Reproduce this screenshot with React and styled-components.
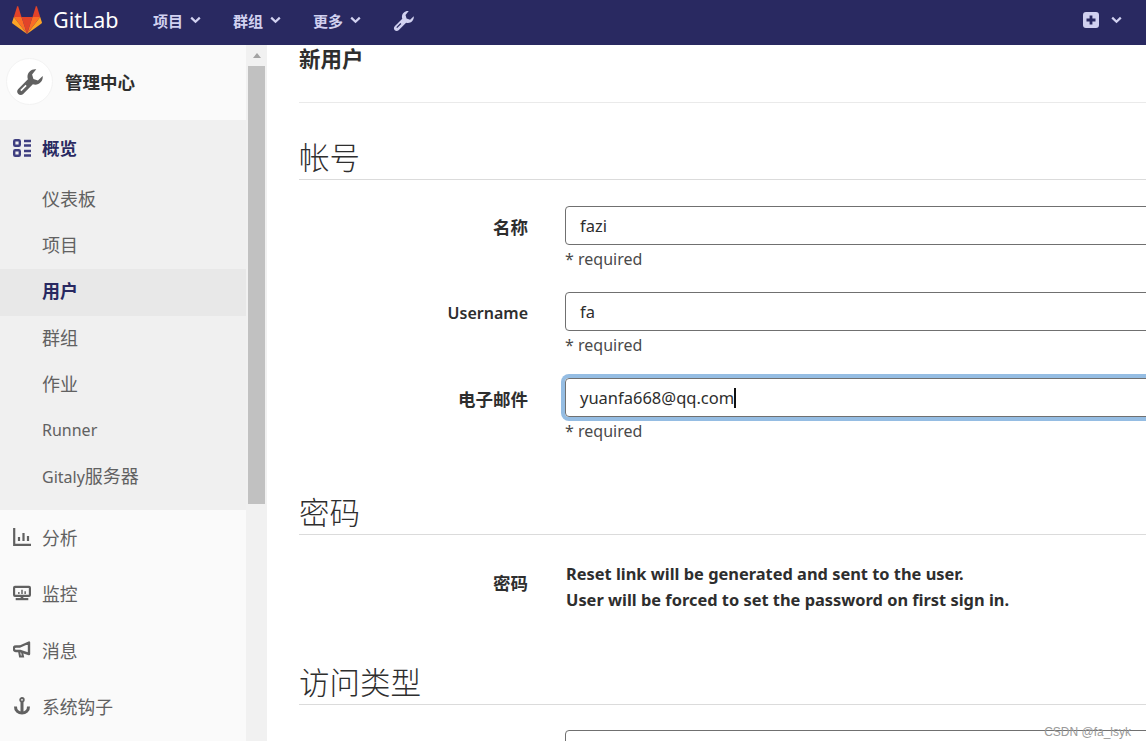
import React from 'react';
import styled, { createGlobalStyle } from 'styled-components';

const FONT = '"Noto Sans", "Noto Sans CJK SC", sans-serif';

const GlobalStyle = createGlobalStyle`
  html, body { margin: 0; padding: 0; height: 100%; overflow: hidden; background: #fff; }
  body { font-family: ${FONT}; color: #2e2e2e; }
  * { box-sizing: border-box; }
`;

const Page = styled.div`
  position: relative;
  width: 1146px;
  height: 741px;
  overflow: hidden;
  display: flex;
  flex-direction: column;
`;

const Navbar = styled.header`
  flex: 0 0 45px;
  height: 45px;
  background: #292961;
  display: flex;
  align-items: center;
  padding: 0 24px 5px 12px;
`;

const Brand = styled.div`
  display: flex;
  align-items: center;
  gap: 11px;
  width: 141px;
  color: #fff;
  font-size: 21.5px;
  line-height: 1;
`;

const NavItem = styled.div`
  display: flex;
  align-items: center;
  gap: 7px;
  width: 80px;
  color: #d1d1f0;
  font-size: 15px;
  font-weight: 700;
`;

const NavRight = styled.div`
  margin-left: auto;
  display: flex;
  align-items: center;
  gap: 12px;
  color: #d1d1f0;
`;

const Body = styled.div`
  flex: 1;
  display: flex;
  min-height: 0;
`;

const Sidebar = styled.aside`
  flex: 0 0 246px;
  background: #fafafa;
`;

const AdminHeader = styled.div`
  height: 75px;
  display: flex;
  align-items: center;
  gap: 12px;
  padding: 0 0 2px 6px;
  font-size: 17.5px;
  font-weight: 700;
  color: #2e2e2e;
`;

const Avatar = styled.div`
  width: 47px;
  height: 47px;
  border-radius: 50%;
  background: #fff;
  border: 1px solid #f3f3f3;
  display: flex;
  align-items: center;
  justify-content: center;
  color: #616161;
`;

const ActiveGroup = styled.div`
  background: #f0f0f0;
  height: 390px;
`;

const GroupTitle = styled.div`
  height: 57px;
  display: flex;
  align-items: center;
  gap: 11px;
  padding: 0 0 2px 13px;
  color: #292961;
  font-size: 17.5px;
  font-weight: 700;
`;

const SubItem = styled.div`
  height: 46.2px;
  line-height: 45px;
  padding-left: 42px;
  font-size: 16px;
  color: ${p => (p.$active ? '#292961' : '#616161')};
  font-weight: ${p => (p.$active ? 700 : 400)};
  background: ${p => (p.$active ? '#e8e8e8' : 'transparent')};
`;

const Cjk = styled.span`
  font-size: 18px;
`;

const MainItem = styled.div`
  height: 56.3px;
  display: flex;
  align-items: center;
  gap: 11px;
  padding: 0 0 2px 13px;
  font-size: 17.8px;
  color: #616161;
`;

const IconSlot = styled.span`
  flex: 0 0 18px;
  width: 18px;
  display: flex;
  justify-content: center;
`;

const ScrollTrack = styled.div`
  flex: 0 0 21px;
  background: #f1f1f1;
  padding: 0 2px;
  display: flex;
  flex-direction: column;
  align-items: center;
`;

const ScrollArrow = styled.div`
  height: 21px;
  width: 100%;
  display: flex;
  align-items: center;
  justify-content: center;
  &::before {
    content: "";
    border-left: 4.5px solid transparent;
    border-right: 4.5px solid transparent;
    border-bottom: 5px solid #a3a3a3;
  }
`;

const ScrollThumb = styled.div`
  width: 100%;
  height: 438px;
  background: #c1c1c1;
`;

const Content = styled.main`
  flex: 1;
  min-width: 0;
  padding-left: 32px;
  overflow: hidden;
`;

const PageTitle = styled.h3`
  margin: 0;
  height: 58px;
  border-bottom: 1px solid #eaeaea;
  font-size: 21.5px;
  font-weight: 700;
  line-height: 28px;
  color: #2e2e2e;
`;

const Section = styled.section`
  margin-top: ${p => p.$top}px;
`;

const Legend = styled.div`
  height: 41px;
  border-bottom: 1px solid #dbdbdb;
  font-size: 30.5px;
  font-weight: 300;
  line-height: 36px;
  color: #2e2e2e;
`;

const Fields = styled.div`
  padding-top: ${p => p.$top}px;
`;

const Row = styled.div`
  display: grid;
  grid-template-columns: 229px 1fr;
  column-gap: 37px;
  height: 86px;
`;

const Label = styled.label`
  text-align: right;
  font-size: ${p => (p.$latin ? 16 : 17.5)}px;
  font-weight: ${p => (p.$latin ? 600 : 700)};
  line-height: 43px;
  color: #2e2e2e;
`;

const FakeInput = styled.div`
  height: 39px;
  width: 640px;
  border: 1px solid #707070;
  border-radius: 4px;
  padding-left: 14px;
  font-size: 16.5px;
  line-height: 38px;
  color: #2e2e2e;
  display: flex;
  align-items: center;
  box-shadow: ${p => (p.$focus ? '0 0 0 4px #95bde3' : 'none')};
`;

const Caret = styled.span`
  display: inline-block;
  width: 2px;
  height: 20px;
  background: #111;
`;

const Help = styled.div`
  font-size: 16px;
  line-height: 28px;
  color: #4a4a4a;
`;

const Note = styled.div`
  font-size: 16.4px;
  font-weight: 700;
  line-height: 26px;
  padding: 26px 0 0 1px;
  color: #2e2e2e;
`;

const NoteRow = styled(Row)`
  height: 97px;
`;

const NoteLabel = styled(Label)`
  padding-top: 35px;
  line-height: 26px;
`;

const Watermark = styled.div`
  position: absolute;
  right: 15px;
  bottom: 2px;
  font-family: "Liberation Sans", sans-serif;
  font-size: 12px;
  color: #9a9a9a;
`;

const Logo = () => (
  <svg width="30" height="28" viewBox="0 0 30 28">
    <path fill="#e24329" d="M15 28 20.5 11h-11z" />
    <path fill="#fc6d26" d="M15 28 9.5 11H1.8z" />
    <path fill="#fca326" d="M1.8 11 .1 16.2c-.2.5 0 1 .4 1.3L15 28z" />
    <path fill="#e24329" d="M1.8 11h7.7L6.2.6c-.2-.5-.9-.5-1.1 0z" />
    <path fill="#fc6d26" d="M15 28l5.5-17h7.7z" />
    <path fill="#fca326" d="M28.2 11l1.7 5.2c.2.5 0 1-.4 1.3L15 28z" />
    <path fill="#e24329" d="M28.2 11h-7.7L23.8.6c.2-.5.9-.5 1.1 0z" />
  </svg>
);

const Chevron = () => (
  <svg width="11" height="8" viewBox="0 0 11 8">
    <path d="M1.2 1.6 5.5 5.8 9.8 1.6" fill="none" stroke="currentColor" strokeWidth="2.2" />
  </svg>
);

const Wrench = ({ size }) => (
  <svg width={size} height={size} viewBox="0 0 24 24">
    <path
      fill="currentColor"
      fillRule="evenodd"
      d="M18 1.2C14 .6 10.200 3.600 10.200 7.800c0 .8.1 1.500.4 2.200L2 18.600c-1.300 1.300-1.300 3.300 0 4.500 1.200 1.200 3.200 1.200 4.400 0l8.600-8.600c.7.2 1.400.3 2.100.3 4.200 0 7.200-3.800 6.600-7.800L19.500 11l-4-1.200-1.200-4zM3.800 19.600l4.700-4.700 1 1-4.700 4.700z"
    />
  </svg>
);

const PlusSquare = () => (
  <svg width="16" height="16" viewBox="0 0 16 16">
    <path
      fill="currentColor"
      fillRule="evenodd"
      d="M3 0h10a3 3 0 0 1 3 3v10a3 3 0 0 1-3 3H3a3 3 0 0 1-3-3V3a3 3 0 0 1 3-3zm3.600 3.500v3.100H3.500v2.800h3.100v3.100h2.800V9.400h3.100V6.600H9.400V3.500z"
    />
  </svg>
);

const OverviewIcon = () => (
  <svg width="18" height="18" viewBox="0 0 18 18" fill="none" stroke="#3f3f80">
    <rect x="1.200" y="1.200" width="5.600" height="5.600" rx="1" strokeWidth="2.400" />
    <rect x="1.200" y="11.200" width="5.600" height="5.600" rx="1" strokeWidth="2.400" />
    <path d="M11 2h7M11 6.500h7M11 12h7M11 16.500h7" strokeWidth="2.400" />
  </svg>
);

const ChartIcon = () => (
  <svg width="18" height="18" viewBox="0 0 18 18" fill="none" stroke="currentColor" strokeWidth="2.200">
    <path d="M1.200 0v16.800H18" />
    <path d="M6 9v4M10.500 5v8M15 8v5" />
  </svg>
);

const MonitorIcon = () => (
  <svg width="20" height="16" viewBox="0 0 20 16" fill="none" stroke="currentColor">
    <rect x="1.200" y="1.200" width="17.600" height="10" rx="1" strokeWidth="2.400" />
    <path d="M3 14.800h14" strokeWidth="2.400" />
    <path d="M10 11v3" strokeWidth="3" />
    <path d="M6.500 7v2M10 4.500V9M13.500 6v3" strokeWidth="1.600" />
  </svg>
);

const BullhornIcon = () => (
  <svg width="18" height="17" viewBox="0 0 18 17" fill="none" stroke="currentColor" strokeWidth="2.400">
    <path d="M16 1.500v11.500L7 10H3a2.200 2.200 0 0 1 0-4.500h4z" strokeLinejoin="round" />
    <path d="M6 10l1 5.500h3L9 11" strokeWidth="2" />
  </svg>
);

const AnchorIcon = () => (
  <svg width="18" height="18" viewBox="0 0 18 18" fill="none" stroke="currentColor" strokeWidth="3">
    <circle cx="9" cy="2.800" r="1.800" strokeWidth="1.800" />
    <path d="M9 5v11.500" />
    <path d="M2.500 9.500c-.5 8.500 13.500 8.500 13 0" strokeWidth="3" />
  </svg>
);

const mainItems = [
  { label: '分析', Icon: ChartIcon },
  { label: '监控', Icon: MonitorIcon },
  { label: '消息', Icon: BullhornIcon },
  { label: '系统钩子', Icon: AnchorIcon },
];

const fields = [
  { label: '名称', value: 'fazi' },
  { label: 'Username', value: 'fa', latin: true },
  { label: '电子邮件', value: 'yuanfa668@qq.com', focus: true },
];

export default function App() {
  return (
    <Page>
      <GlobalStyle />
      <Navbar>
        <Brand>
          <Logo />
          GitLab
        </Brand>
        {['项目', '群组', '更多'].map(item => (
          <NavItem key={item}>
            {item}
            <Chevron />
          </NavItem>
        ))}
        <NavItem>
          <Wrench size={21} />
        </NavItem>
        <NavRight>
          <PlusSquare />
          <Chevron />
        </NavRight>
      </Navbar>
      <Body>
        <Sidebar>
          <AdminHeader>
            <Avatar>
              <Wrench size={27} />
            </Avatar>
            管理中心
          </AdminHeader>
          <ActiveGroup>
            <GroupTitle>
              <OverviewIcon />
              概览
            </GroupTitle>
            <SubItem><Cjk>仪表板</Cjk></SubItem>
            <SubItem><Cjk>项目</Cjk></SubItem>
            <SubItem $active><Cjk>用户</Cjk></SubItem>
            <SubItem><Cjk>群组</Cjk></SubItem>
            <SubItem><Cjk>作业</Cjk></SubItem>
            <SubItem>Runner</SubItem>
            <SubItem>Gitaly<Cjk>服务器</Cjk></SubItem>
          </ActiveGroup>
          {mainItems.map(({ label, Icon }) => (
            <MainItem key={label}>
              <IconSlot>
                <Icon />
              </IconSlot>
              {label}
            </MainItem>
          ))}
        </Sidebar>
        <ScrollTrack>
          <ScrollArrow />
          <ScrollThumb />
        </ScrollTrack>
        <Content>
          <PageTitle>新用户</PageTitle>
          <Section $top={36}>
            <Legend>帐号</Legend>
            <Fields $top={26}>
              {fields.map(f => (
                <Row key={f.label}>
                  <Label $latin={f.latin}>{f.label}</Label>
                  <div>
                    <FakeInput $focus={f.focus}>
                      {f.value}
                      {f.focus && <Caret />}
                    </FakeInput>
                    <Help>* required</Help>
                  </div>
                </Row>
              ))}
            </Fields>
          </Section>
          <Section $top={30}>
            <Legend>密码</Legend>
            <NoteRow>
              <NoteLabel>密码</NoteLabel>
              <Note>
                Reset link will be generated and sent to the user.
                <br />
                User will be forced to set the password on first sign in.
              </Note>
            </NoteRow>
          </Section>
          <Section $top={32}>
            <Legend>访问类型</Legend>
            <Fields $top={25}>
              <Row>
                <span />
                <FakeInput />
              </Row>
            </Fields>
          </Section>
        </Content>
      </Body>
      <Watermark>CSDN @fa_lsyk</Watermark>
    </Page>
  );
}
